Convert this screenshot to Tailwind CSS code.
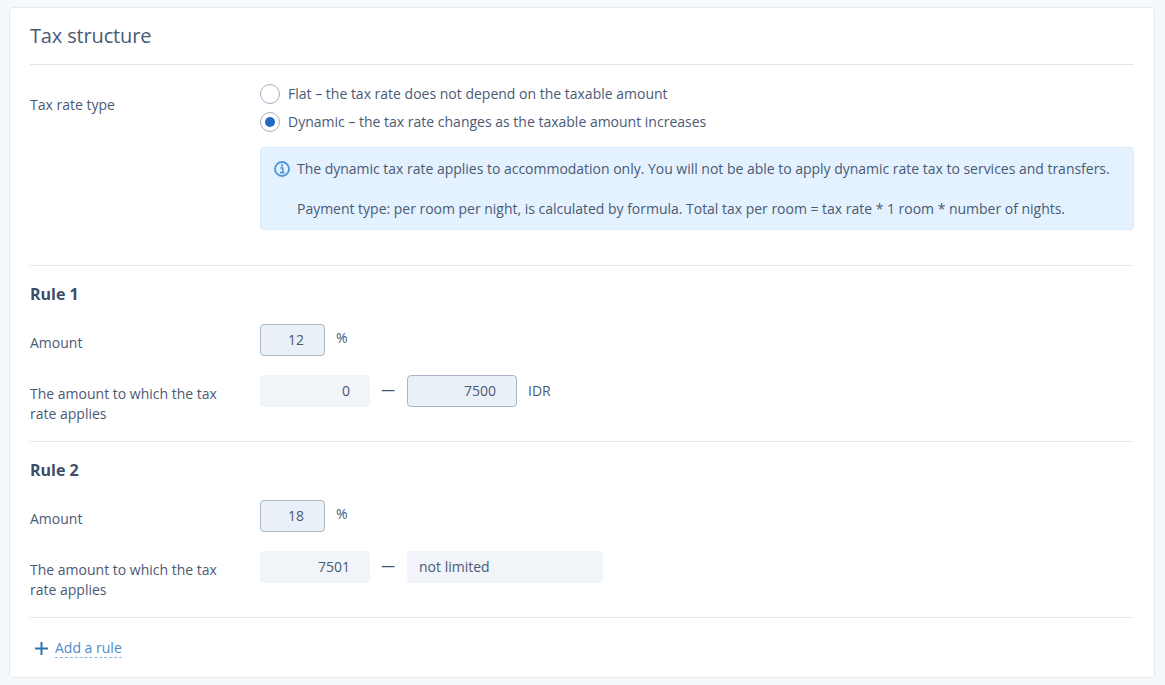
<!DOCTYPE html>
<html lang="en">
  <head>
    <meta charset="UTF-8" />
    <title>Tax structure</title>
    <script src="https://cdn.jsdelivr.net/npm/@tailwindcss/browser@4"></script>
  </head>
  <body class="bg-[#f5f9fc] h-[685px] overflow-hidden font-['Open_Sans',sans-serif] text-[14px] leading-[20px] text-[#4a5a75]">
    <div class="ml-[9px] mr-[10px] mt-[7px] h-[671px] bg-white border border-[#e6e9ee] rounded-[4px] pl-[20px] pr-[20px]">
      <!-- Title -->
      <h2 class="h-[57px] pt-[14px] text-[20px] leading-[28px] tracking-[-0.15px] border-b border-[#dfe7f0]">Tax structure</h2>

      <!-- Tax rate type -->
      <div class="flex h-[201px] border-b border-[#e6e9ee]">
        <div class="w-[230px] pt-[30px]">Tax rate type</div>
        <div class="flex-1 pt-[19px]">
          <label class="flex items-center gap-[8px] h-[20px]">
            <span class="w-[20px] h-[20px] rounded-full border border-[#a3aec1] bg-white"></span>
            Flat – the tax rate does not depend on the taxable amount
          </label>
          <label class="flex items-center gap-[8px] h-[20px] mt-[8px]">
            <span class="w-[20px] h-[20px] rounded-full border border-[#a3aec1] bg-white flex items-center justify-center">
              <span class="w-[10px] h-[10px] rounded-full bg-[#2369c4]"></span>
            </span>
            Dynamic – the tax rate changes as the taxable amount increases
          </label>
          <div class="mt-[15px] h-[83px] bg-[#e3f2fe] border border-[#d8ebfb] rounded-[4px] pl-[36px] pt-[11px] tracking-[-0.017px] relative">
            <svg class="absolute left-[13px] top-[13px]" width="16" height="16" viewBox="0 0 16 16" fill="none">
              <circle cx="8" cy="8" r="7" stroke="#4f97dc" stroke-width="1.8" />
              <rect x="7" y="3.4" width="2" height="2" fill="#4f97dc" />
              <path d="M6.2 7h2.6v4.4M6 11.6h4.4" stroke="#4f97dc" stroke-width="1.6" />
            </svg>
            <p>The dynamic tax rate applies to accommodation only. You will not be able to apply dynamic rate tax to services and transfers.</p>
            <p class="mt-[20px]">Payment type: per room per night, is calculated by formula. Total tax per room = tax rate * 1 room * number of nights.</p>
          </div>
        </div>
      </div>

      <!-- Rule 1 -->
      <section class="h-[176px] border-b border-[#e6e9ee]">
        <h3 class="pt-[17px] text-[16px] leading-[22px] font-bold text-[#3d4d68]">Rule 1</h3>
        <div class="flex mt-[19px] h-[32px]">
          <div class="w-[230px] pt-[9px]">Amount</div>
          <div class="w-[65px] h-[32px] bg-[#eaf0f7] border border-[#abb5c6] rounded-[4px] text-right pr-[20px] leading-[30px]">12</div>
          <span class="ml-[11px] pt-[4px] text-[14px]">%</span>
        </div>
        <div class="flex mt-[19px]">
          <div class="w-[230px] pt-[9px]">The amount to which the tax<br />rate applies</div>
          <div class="w-[110px] h-[32px] bg-[#f1f4f8] rounded-[4px] text-right pr-[20px] leading-[32px]">0</div>
          <span class="w-[37px] pr-[1px] text-center leading-[30px] text-[#46587a]">—</span>
          <div class="w-[110px] h-[32px] bg-[#eaf0f7] border border-[#abb5c6] rounded-[4px] text-right pr-[20px] leading-[30px]">7500</div>
          <span class="ml-[11px] leading-[32px]">IDR</span>
        </div>
      </section>

      <!-- Rule 2 -->
      <section class="h-[176px] border-b border-[#e6e9ee]">
        <h3 class="pt-[17px] text-[16px] leading-[22px] font-bold text-[#3d4d68]">Rule 2</h3>
        <div class="flex mt-[19px] h-[32px]">
          <div class="w-[230px] pt-[9px]">Amount</div>
          <div class="w-[65px] h-[32px] bg-[#eaf0f7] border border-[#abb5c6] rounded-[4px] text-right pr-[20px] leading-[30px]">18</div>
          <span class="ml-[11px] pt-[4px] text-[14px]">%</span>
        </div>
        <div class="flex mt-[19px]">
          <div class="w-[230px] pt-[9px]">The amount to which the tax<br />rate applies</div>
          <div class="w-[110px] h-[32px] bg-[#f1f4f8] rounded-[4px] text-right pr-[20px] leading-[32px]">7501</div>
          <span class="w-[37px] pr-[1px] text-center leading-[30px] text-[#46587a]">—</span>
          <div class="w-[196px] h-[32px] bg-[#f1f4f8] rounded-[4px] pl-[12px] leading-[32px]">not limited</div>
        </div>
      </section>

      <!-- Add a rule -->
      <div class="flex items-center h-[59px] pt-[1px] pl-[5px]">
        <svg width="13" height="13" viewBox="0 0 13 13" fill="none">
          <path d="M6.5 0v13M0 6.5h13" stroke="#2f72b2" stroke-width="2" />
        </svg>
        <a class="ml-[7px] text-[#4f8bc9] border-b border-dashed border-[#8db5de] leading-[18px]">Add a rule</a>
      </div>
    </div>
  </body>
</html>
